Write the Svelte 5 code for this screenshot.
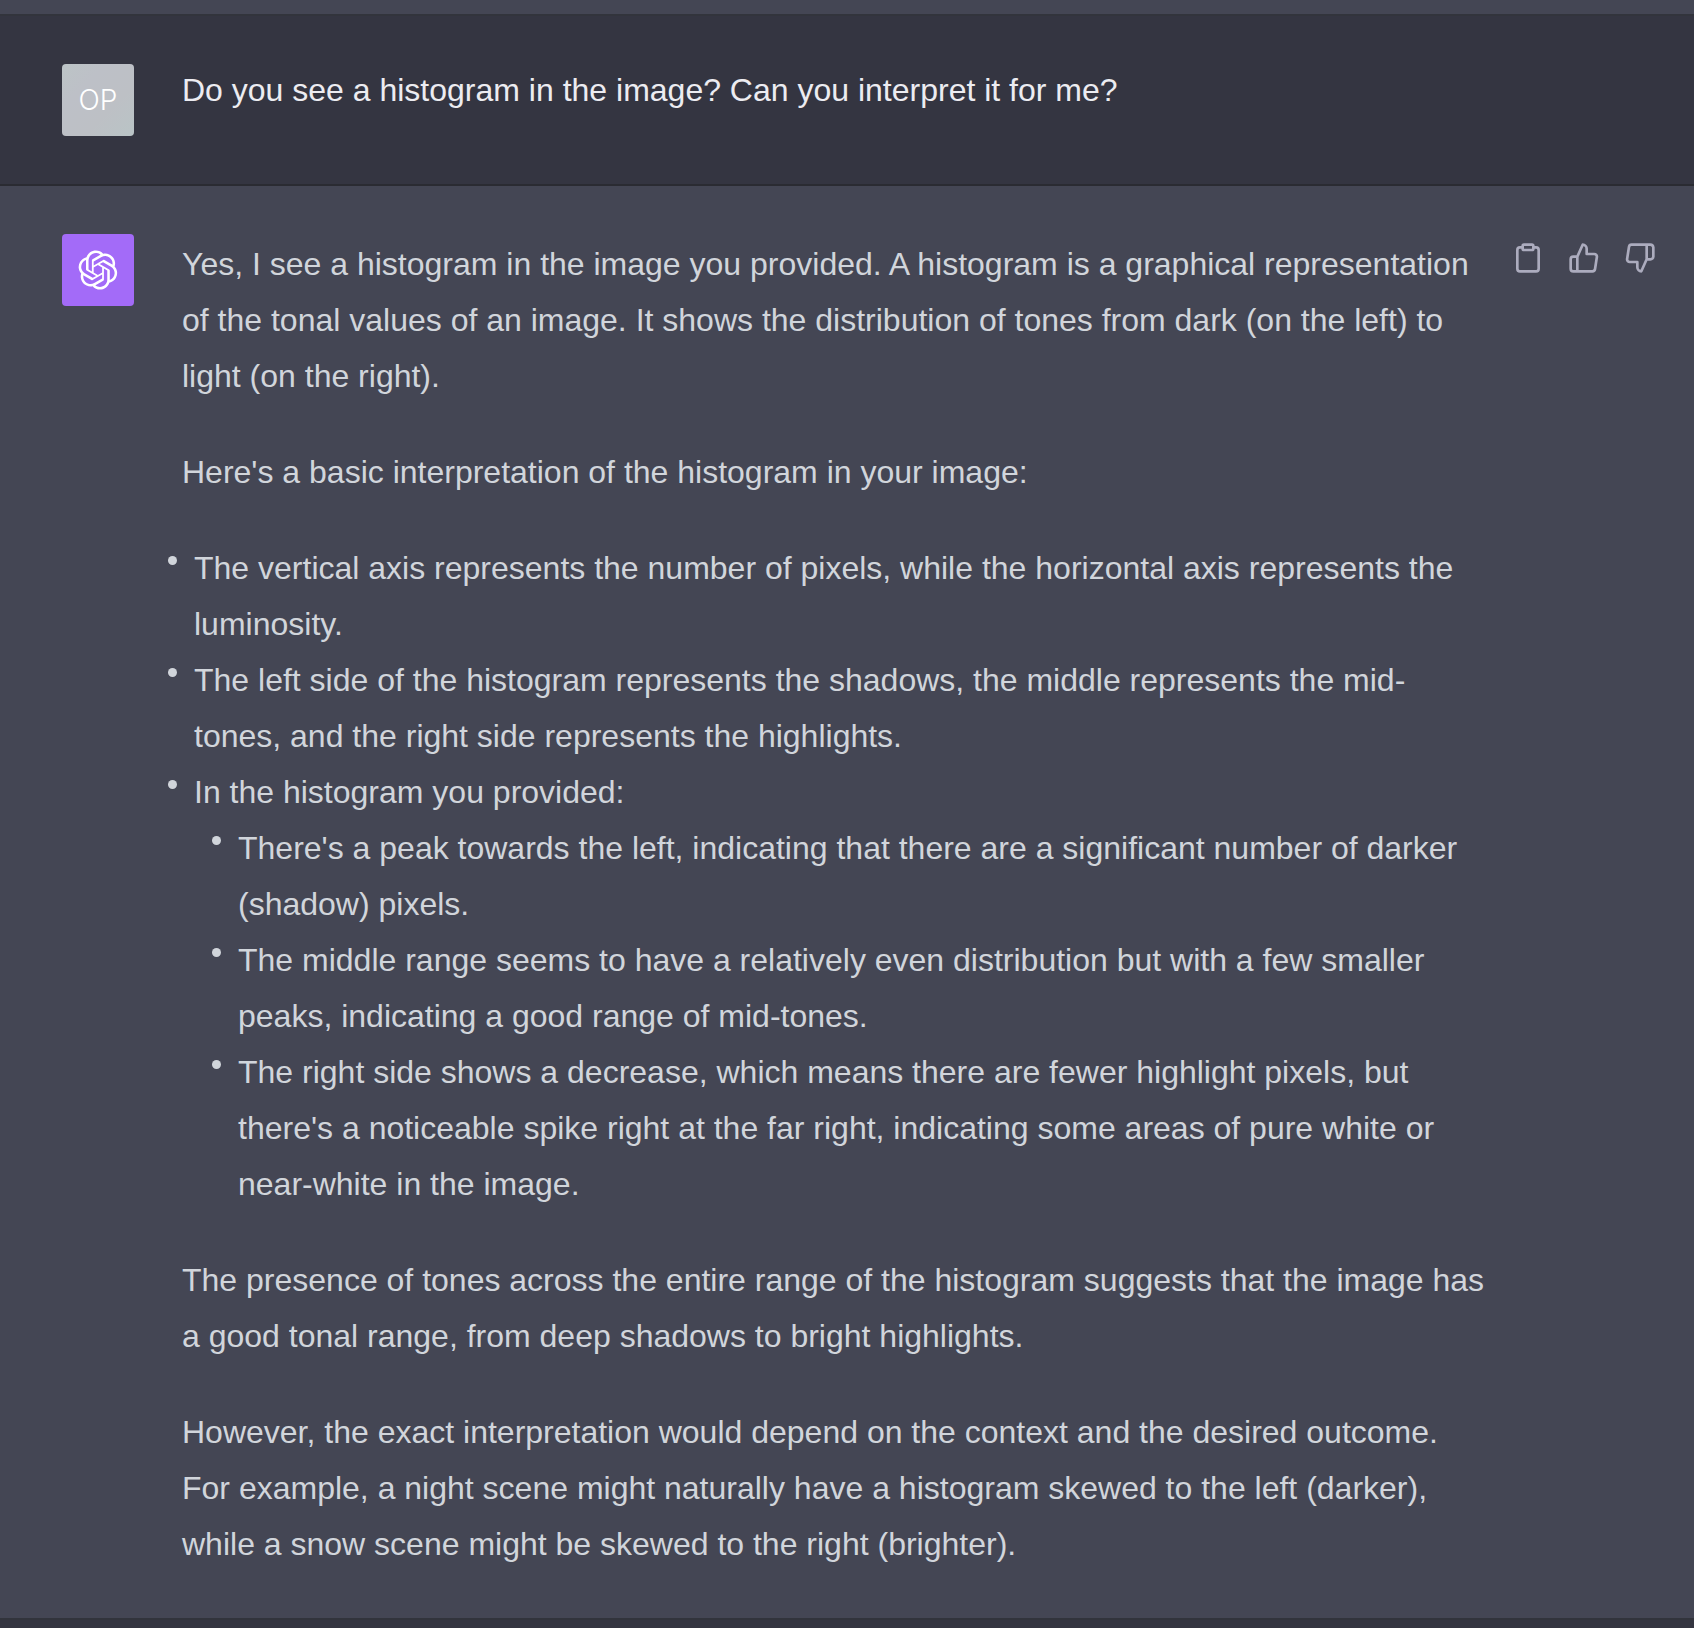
<script>
  const question = 'Do you see a histogram in the image? Can you interpret it for me?'

  const axes = [
    'The vertical axis represents the number of pixels, while the horizontal axis represents the luminosity.',
    'The left side of the histogram represents the shadows, the middle represents the mid-tones, and the right side represents the highlights.'
  ]

  const findings = [
    "There's a peak towards the left, indicating that there are a significant number of darker (shadow) pixels.",
    'The middle range seems to have a relatively even distribution but with a few smaller peaks, indicating a good range of mid-tones.',
    "The right side shows a decrease, which means there are fewer highlight pixels, but there's a noticeable spike right at the far right, indicating some areas of pure white or near-white in the image."
  ]

  let copied = $state(false)
  let rating = $state(null)
</script>

<main class="thread">
  <div class="previous"></div>

  <article class="message user">
    <div class="avatar initials">OP</div>
    <div class="text">{question}</div>
  </article>

  <article class="message assistant">
    <div class="avatar bot">
      <svg width="40" height="40" viewBox="0 0 41 41" fill="none" aria-hidden="true">
        <path d="M37.5324 16.8707C37.9808 15.5241 38.1363 14.0974 37.9886 12.6859C37.8409 11.2744 37.3934 9.91076 36.676 8.68622C35.6126 6.83404 33.9882 5.3676 32.0373 4.4985C30.0864 3.62941 27.9098 3.40259 25.8215 3.85078C24.8796 2.7893 23.7219 1.94125 22.4257 1.36341C21.1295 0.785575 19.7249 0.491269 18.3058 0.500197C16.1708 0.495044 14.0893 1.16803 12.3614 2.42214C10.6335 3.67624 9.34853 5.44666 8.6917 7.47815C7.30085 7.76286 5.98686 8.3414 4.8377 9.17505C3.68854 10.0087 2.73073 11.0782 2.02839 12.312C0.956464 14.1591 0.498905 16.2988 0.721698 18.4228C0.944492 20.5467 1.83612 22.5449 3.268 24.1293C2.81966 25.4759 2.66413 26.9026 2.81182 28.3141C2.95951 29.7256 3.40701 31.0892 4.12437 32.3138C5.18791 34.1659 6.8123 35.6322 8.76321 36.5013C10.7141 37.3704 12.8907 37.5973 14.9789 37.1492C15.9208 38.2107 17.0786 39.0587 18.3747 39.6366C19.6709 40.2144 21.0755 40.5087 22.4946 40.4998C24.6307 40.5054 26.7133 39.8321 28.4418 38.5772C30.1704 37.3223 31.4556 35.5506 32.1119 33.5179C33.5027 33.2332 34.8167 32.6547 35.9659 31.821C37.115 30.9874 38.0728 29.9178 38.7752 28.684C39.8458 26.8371 40.3023 24.6979 40.0789 22.5748C39.8556 20.4517 38.9639 18.4544 37.5324 16.8707ZM22.4978 37.8849C20.7443 37.8874 19.0459 37.2733 17.6994 36.1501C17.7601 36.117 17.8666 36.0586 17.936 36.0161L25.9004 31.4156C26.1003 31.3019 26.2663 31.137 26.3813 30.9378C26.4964 30.7386 26.5563 30.5124 26.5549 30.2825V19.0542L29.9213 20.998C29.9389 21.0068 29.9541 21.0198 29.9656 21.0359C29.977 21.052 29.9842 21.0707 29.9867 21.0902V30.3889C29.9842 32.375 29.1946 34.2791 27.7909 35.6841C26.3872 37.0892 24.4838 37.8806 22.4978 37.8849ZM6.39227 31.0064C5.51397 29.4888 5.19742 27.7107 5.49804 25.9832C5.55718 26.0187 5.66048 26.0818 5.73461 26.1244L13.699 30.7248C13.8975 30.8408 14.1233 30.902 14.3532 30.902C14.583 30.902 14.8088 30.8408 15.0073 30.7248L24.731 25.1103V28.9979C24.7321 29.0177 24.7283 29.0376 24.7199 29.0556C24.7115 29.0736 24.6988 29.0893 24.6829 29.1012L16.6317 33.7497C14.9096 34.7416 12.8643 35.0097 10.9447 34.4954C9.02506 33.9811 7.38785 32.7263 6.39227 31.0064ZM4.29707 13.6194C5.17156 12.0998 6.55279 10.9364 8.19885 10.3327C8.19885 10.4013 8.19491 10.5228 8.19491 10.6071V19.808C8.19351 20.0378 8.25334 20.2638 8.36823 20.4629C8.48312 20.6619 8.64893 20.8267 8.84863 20.9404L18.5723 26.5542L15.206 28.4979C15.1894 28.5089 15.1703 28.5155 15.1505 28.5173C15.1307 28.5191 15.1107 28.516 15.0924 28.5082L7.04046 23.8557C5.32135 22.8601 4.06716 21.2235 3.55289 19.3046C3.03862 17.3858 3.30624 15.3413 4.29707 13.6194ZM31.955 20.0556L22.2312 14.4411L25.5976 12.4981C25.6142 12.4872 25.6333 12.4805 25.6531 12.4787C25.6729 12.4769 25.6928 12.4801 25.7111 12.4879L33.7631 17.1364C34.9967 17.849 36.0017 18.8982 36.6606 20.1613C37.3194 21.4244 37.6047 22.849 37.4832 24.2684C37.3617 25.6878 36.8382 27.0432 35.9743 28.1759C35.1103 29.3086 33.9415 30.1717 32.6047 30.6641C32.6047 30.5947 32.6047 30.4733 32.6047 30.3889V21.188C32.6066 20.9586 32.5474 20.7328 32.4332 20.5338C32.319 20.3348 32.154 20.1698 31.955 20.0556ZM35.3055 15.0128C35.2464 14.9765 35.1431 14.9142 35.069 14.8717L27.1045 10.2712C26.906 10.1554 26.6803 10.0943 26.4504 10.0943C26.2206 10.0943 25.9948 10.1554 25.7963 10.2712L16.0726 15.8858V11.9982C16.0715 11.9783 16.0753 11.9585 16.0837 11.9405C16.0921 11.9225 16.1048 11.9068 16.1207 11.8949L24.1719 7.25025C25.4053 6.53903 26.8158 6.19376 28.2383 6.25482C29.6608 6.31589 31.0364 6.78077 32.2044 7.59508C33.3723 8.40939 34.2842 9.53945 34.8334 10.8531C35.3826 12.1667 35.5464 13.6095 35.3055 15.0128ZM14.2424 21.9419L10.8752 19.9981C10.8576 19.9893 10.8423 19.9763 10.8309 19.9602C10.8195 19.9441 10.8122 19.9254 10.8098 19.9058V10.6071C10.8107 9.18295 11.2173 7.78848 11.9819 6.58696C12.7466 5.38544 13.8377 4.42659 15.1275 3.82264C16.4173 3.21869 17.8524 2.99464 19.2649 3.1767C20.6775 3.35876 22.0089 3.93941 23.1034 4.85067C23.0427 4.88379 22.937 4.94215 22.8668 4.98473L14.9024 9.58517C14.7025 9.69878 14.5366 9.86356 14.4215 10.0626C14.3065 10.2616 14.2466 10.4877 14.2479 10.7175L14.2424 21.9419ZM16.071 17.9991L20.4018 15.4978L24.7325 17.9975V22.9985L20.4018 25.4983L16.071 22.9985V17.9991Z" fill="currentColor" />
      </svg>
    </div>

    <div class="text">
      <p>
        Yes, I see a histogram in the image you provided. A histogram is a graphical representation
        of the tonal values of an image. It shows the distribution of tones from dark (on the left)
        to light (on the right).
      </p>
      <p>Here's a basic interpretation of the histogram in your image:</p>
      <ul>
        {#each axes as item}
          <li>{item}</li>
        {/each}
        <li>
          In the histogram you provided:
          <ul>
            {#each findings as item}
              <li>{item}</li>
            {/each}
          </ul>
        </li>
      </ul>
      <p>
        The presence of tones across the entire range of the histogram suggests that the image has
        a good tonal range, from deep shadows to bright highlights.
      </p>
      <p>
        However, the exact interpretation would depend on the context and the desired outcome. For
        example, a night scene might naturally have a histogram skewed to the left (darker), while a
        snow scene might be skewed to the right (brighter).
      </p>
    </div>

    <div class="actions">
      <button type="button" aria-label="Copy" aria-pressed={copied} onclick={() => (copied = true)}>
        <svg viewBox="0 0 24 24" aria-hidden="true">
          <path d="M16 4h2a2 2 0 0 1 2 2v14a2 2 0 0 1-2 2H6a2 2 0 0 1-2-2V6a2 2 0 0 1 2-2h2" />
          <rect x="8" y="2" width="8" height="4" rx="1" ry="1" />
        </svg>
      </button>
      <button type="button" aria-label="Good response" aria-pressed={rating === 'up'} onclick={() => (rating = 'up')}>
        <svg viewBox="0 0 24 24" aria-hidden="true">
          <path d="M14 9V5a3 3 0 0 0-3-3l-4 9v11h11.28a2 2 0 0 0 2-1.7l1.38-9a2 2 0 0 0-2-2.3zM7 22H4a2 2 0 0 1-2-2v-7a2 2 0 0 1 2-2h3" />
        </svg>
      </button>
      <button type="button" aria-label="Bad response" aria-pressed={rating === 'down'} onclick={() => (rating = 'down')}>
        <svg viewBox="0 0 24 24" aria-hidden="true">
          <path d="M10 15v4a3 3 0 0 0 3 3l4-9V2H5.72a2 2 0 0 0-2 1.7l-1.38 9a2 2 0 0 0 2 2.3zm7-13h2.67A2.31 2.31 0 0 1 22 4v7a2.31 2.31 0 0 1-2.33 2H17" />
        </svg>
      </button>
    </div>
  </article>
</main>

<style>
  :global(body) {
    margin: 0;
    background: #343541;
  }

  .thread {
    font-family: 'Liberation Sans', Arial, sans-serif;
    font-size: 32px;
  }

  .previous {
    height: 14px;
    background: #444654;
    border-bottom: 2px solid rgba(32, 33, 35, 0.5);
  }

  .message {
    display: flex;
    align-items: flex-start;
    padding: 48px 30px 46px 62px;
    border-bottom: 2px solid rgba(32, 33, 35, 0.5);
  }

  .user {
    padding-bottom: 48px;
    background: #343541;
    color: #ececf1;
    line-height: 48px;
  }

  .assistant {
    background: #444654;
    color: #d1d5db;
    line-height: 56px;
  }

  .avatar {
    display: flex;
    flex: none;
    align-items: center;
    justify-content: center;
    width: 72px;
    height: 72px;
    margin-right: 48px;
    border-radius: 4px;
    color: #fff;
  }

  .initials {
    background: linear-gradient(135deg, #bcc4c6, #bdc0c7 30%, #bdc0c5 65%, #b9c4c6);
    font-family: Inter, sans-serif;
    font-size: 28px;
    font-weight: 300;
  }

  .bot {
    background: #a36bf8;
  }

  .text {
    flex: 1;
    min-width: 0;
    padding-top: 2px;
  }

  p {
    margin: 0 0 40px;
  }

  p:last-child {
    margin-bottom: 0;
  }

  ul {
    margin: 0;
    padding-left: 12px;
    list-style: none;
  }

  .text > ul {
    margin-bottom: 40px;
  }

  ul ul {
    padding-left: 44px;
  }

  li {
    position: relative;
  }

  li::before {
    content: '';
    position: absolute;
    top: 16px;
    left: -26px;
    width: 9px;
    height: 9px;
    border-radius: 50%;
    background: #d1d5db;
  }

  .actions {
    display: flex;
    flex: none;
    gap: 8px;
    margin-left: 12px;
  }

  button {
    display: flex;
    padding: 8px;
    border: 0;
    border-radius: 6px;
    background: none;
    color: #acacbe;
    cursor: pointer;
  }

  button:hover {
    color: #d1d5db;
  }

  button svg {
    width: 32px;
    height: 32px;
    fill: none;
    stroke: currentColor;
    stroke-width: 2;
    stroke-linecap: round;
    stroke-linejoin: round;
  }
</style>
